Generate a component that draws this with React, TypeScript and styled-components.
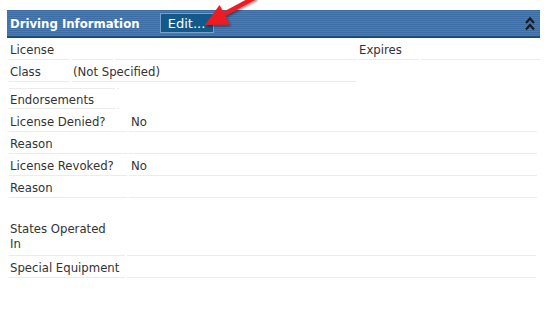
import styled, { createGlobalStyle } from "styled-components";

const GlobalStyle = createGlobalStyle`
  html, body {
    margin: 0;
    background: #fff;
  }
  body {
    font-family: "DejaVu Sans Condensed", "DejaVu Sans", Verdana, sans-serif;
    font-stretch: semi-condensed;
    font-size: 13px;
    line-height: 15px;
    color: #333;
  }
`;

const Page = styled.div`
  position: relative;
  width: 533px;
  padding: 10px 0 0 7px;
`;

const Bar = styled.div`
  display: flex;
  align-items: center;
  height: 26px;
  padding: 0 5px 0 3px;
  background: repeating-linear-gradient(
    to bottom,
    #3c6da4 0,
    #3c6da4 1px,
    #4b7cb4 1px,
    #4b7cb4 2px
  );
  border-bottom: 2px solid #1b4b7b;
`;

const Title = styled.h2`
  margin: 0;
  font-size: 13px;
  font-weight: bold;
  color: #fff;
`;

const EditButton = styled.button`
  margin-left: 20px;
  width: 54px;
  height: 20px;
  padding: 0;
  background: #135a8b;
  border: 1px solid #77a1c7;
  color: #fff;
  font-family: "DejaVu Sans", Verdana, sans-serif;
  font-size: 13px;
  cursor: pointer;
`;

const Collapse = styled.button`
  display: flex;
  margin-left: auto;
  padding: 0;
  background: none;
  border: 0;
`;

const Arrow = styled.svg`
  position: absolute;
  left: 0;
  top: 0;
  overflow: visible;
  pointer-events: none;
`;

const Section = styled.div<{ $cols: string; $rows: string; $top: number }>`
  display: grid;
  grid-template-columns: ${(p) => p.$cols};
  grid-template-rows: ${(p) => p.$rows};
  column-gap: 2px;
  row-gap: 1px;
  margin: ${(p) => p.$top}px 0 0 2px;
`;

const Cell = styled.div<{ $span?: number; $nowrap?: boolean }>`
  display: flex;
  align-items: center;
  padding: 1px 1px 0;
  border-bottom: 1px solid #ececec;
  grid-column: span ${(p) => p.$span ?? 1};
  white-space: ${(p) => (p.$nowrap ? "nowrap" : "normal")};
`;

const ValueCell = styled(Cell)`
  padding-left: 2px;
`;

export default function App() {
  return (
    <>
      <GlobalStyle />
      <Page>
        <Bar>
          <Title>Driving Information</Title>
          <EditButton>Edit...</EditButton>
          <Collapse aria-label="Collapse">
            <svg width="10" height="15" viewBox="0 0 10 15">
              <path d="M1 7 L5 2.5 L9 7" fill="none" stroke="#1c1c1c" strokeWidth="2.2" />
              <path d="M1 13.5 L5 9 L9 13.5" fill="none" stroke="#1c1c1c" strokeWidth="2.2" />
            </svg>
          </Collapse>
        </Bar>

        <Section $cols="61px 41px 241px 61px 119px" $rows="21px 21px" $top={1}>
          <Cell>License</Cell>
          <Cell />
          <Cell />
          <Cell>Expires</Cell>
          <Cell />
          <Cell>Class</Cell>
          <Cell $span={2}>(Not Specified)</Cell>
        </Section>

        <Section $cols="106px 2px" $rows="6px 19px" $top={1}>
          <Cell />
          <Cell />
          <Cell>Endorsements</Cell>
          <Cell />
        </Section>

        <Section $cols="118px 408px" $rows="22px 21px 21px 21px" $top={1}>
          <Cell $nowrap>License Denied?</Cell>
          <ValueCell>No</ValueCell>
          <Cell>Reason</Cell>
          <ValueCell />
          <Cell $nowrap>License Revoked?</Cell>
          <ValueCell>No</ValueCell>
          <Cell>Reason</Cell>
          <ValueCell />
        </Section>

        <Section $cols="116px 409px" $rows="40px 21px" $top={18}>
          <Cell>
            States Operated
            <br />
            In
          </Cell>
          <ValueCell />
          <Cell $nowrap>Special Equipment</Cell>
          <ValueCell />
        </Section>

        <Arrow width="550" height="40" viewBox="0 0 550 40">
          <defs>
            <filter id="arrowShadow" x="-20%" y="-20%" width="140%" height="140%">
              <feDropShadow dx="1" dy="1.5" stdDeviation="1" floodColor="#000" floodOpacity="0.45" />
            </filter>
          </defs>
          <g filter="url(#arrowShadow)" fill="#ec1c24" stroke="none">
            <path d="M254 -2 L226 13" stroke="#ec1c24" strokeWidth="4.5" strokeLinecap="round" />
            <polygon points="205,25 219.5,5 230,24.5" />
          </g>
        </Arrow>
      </Page>
    </>
  );
}
